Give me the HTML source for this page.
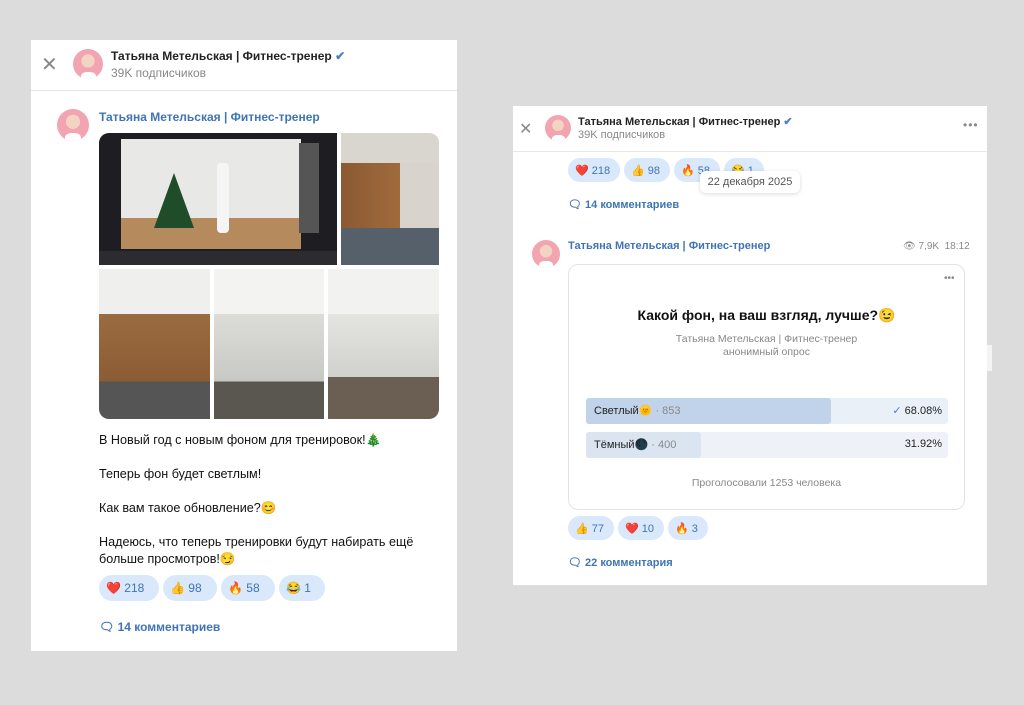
<!DOCTYPE html>
<html><head><meta charset="utf-8"><style>
*{box-sizing:border-box;margin:0;padding:0}
body{width:1024px;height:705px;background:#dcdcdc;position:relative;overflow:hidden;font-family:"Liberation Sans",sans-serif;}
.card{position:absolute;background:#fff}
.a{position:absolute}
.av{position:absolute;border-radius:50%;background:radial-gradient(circle at 50% 40%,#f3d3c2 0 28%,transparent 29%),linear-gradient(#f2a5b0,#f2a5b0);overflow:hidden}
.av::after{content:"";position:absolute;left:25%;bottom:-10%;width:50%;height:35%;background:#fff;border-radius:40% 40% 0 0}
.nm{font-weight:bold;color:#222;font-size:12px}
.sub{color:#888;font-size:12px}
.bl{color:#3f74b5;font-weight:bold;font-size:12px}
.rx{position:absolute;height:26px;border-radius:13px;background:#d9e8fb;color:#3f74b5;font-size:12px;display:flex;align-items:center;padding-left:7px;gap:6px}
.txt{font-size:12.6px;color:#111}
.cm{color:#3f74b5;font-weight:bold;font-size:12px}
.img{position:absolute}
</style></head><body>
<div class="card" style="left:31px;top:40px;width:426px;height:611px">
 <div class="a" style="left:10px;top:12px;font-size:20px;color:#888">✕</div>
 <div class="av" style="left:42px;top:9px;width:30px;height:30px"></div>
 <div class="a nm" style="left:80px;top:9px">Татьяна Метельская | Фитнес-тренер <span style="color:#4a80c8">✔</span></div>
 <div class="a sub" style="left:80px;top:26px">39K подписчиков</div>
 <div class="a" style="left:0;top:50px;width:426px;height:1px;background:#e7e7e7"></div>
 <div class="av" style="left:26px;top:69px;width:32px;height:32px"></div>
 <div class="a bl" style="left:68px;top:70px">Татьяна Метельская | Фитнес-тренер</div>
 <div class="a" style="left:68px;top:93px;width:340px;height:286px;border-radius:10px;overflow:hidden">
  <div class="img" style="left:0;top:0;width:238px;height:132px;background:#1e1e22">
   <div class="img" style="left:22px;top:6px;width:180px;height:110px;background:linear-gradient(#e8e8e6 72%,#b58a5d 72%)"></div>
   <div class="img" style="left:55px;top:40px;width:0;height:0;border-left:20px solid transparent;border-right:20px solid transparent;border-bottom:55px solid #1f4d2a"></div>
   <div class="img" style="left:118px;top:30px;width:12px;height:70px;background:#f5f5f5;border-radius:4px"></div>
   <div class="img" style="left:200px;top:10px;width:20px;height:90px;background:#555"></div>
   <div class="img" style="left:0;top:118px;width:238px;height:14px;background:#2b2b30"></div>
  </div>
  <div class="img" style="left:242px;top:0;width:98px;height:132px;background:linear-gradient(90deg,#8b5a32 0,#a06a3c 60%,#d8d3cc 60%);"><div class="img" style="left:0;top:0;width:98px;height:30px;background:#d9d5cf"></div><div class="img" style="left:0;top:95px;width:98px;height:37px;background:#55606a"></div></div>
  <div class="img" style="left:0;top:136px;width:111px;height:150px;background:linear-gradient(#efefed 30%,#9a6a40 30%,#8c5c34 75%,#555 75%)"></div>
  <div class="img" style="left:115px;top:136px;width:110px;height:150px;background:linear-gradient(#f3f3f1 30%,#dcdcd9 30%,#c8c8c4 75%,#5a5650 75%)"></div>
  <div class="img" style="left:229px;top:136px;width:111px;height:150px;background:linear-gradient(#f2f2f0 30%,#e4e4e1 30%,#d0d0cc 72%,#6a5f52 72%)"></div>
 </div>
 <div class="a txt" style="left:68px;top:392px;line-height:17px">В Новый год с новым фоном для тренировок!🎄<br><br>Теперь фон будет светлым!<br><br>Как вам такое обновление?😊<br><br>Надеюсь, что теперь тренировки будут набирать ещё<br>больше просмотров!😏</div>
 <div class="rx" style="left:68px;top:535px;width:60px">❤️ 218</div>
 <div class="rx" style="left:132px;top:535px;width:54px">👍 98</div>
 <div class="rx" style="left:190px;top:535px;width:54px">🔥 58</div>
 <div class="rx" style="left:248px;top:535px;width:46px">😂 1</div>
 <div class="a cm" style="left:68px;top:580px">🗨 14 комментариев</div>
</div>

<div class="card" style="left:513px;top:106px;width:474px;height:479px">
 <div class="a" style="left:6px;top:13px;font-size:16px;color:#888">✕</div>
 <div class="av" style="left:32px;top:9px;width:26px;height:26px"></div>
 <div class="a nm" style="left:65px;top:9px;font-size:11px">Татьяна Метельская | Фитнес-тренер <span style="color:#4a80c8">✔</span></div>
 <div class="a sub" style="left:65px;top:23px;font-size:11px">39K подписчиков</div>
 <div class="a" style="left:450px;top:12px;color:#888;font-size:12px;letter-spacing:1px">•••</div>
 <div class="a" style="left:0;top:45px;width:474px;height:1px;background:#e7e7e7"></div>
 <div class="rx" style="left:55px;top:52px;width:52px;height:24px;font-size:11px">❤️ 218</div>
 <div class="rx" style="left:111px;top:52px;width:46px;height:24px;font-size:11px">👍 98</div>
 <div class="rx" style="left:161px;top:52px;width:46px;height:24px;font-size:11px">🔥 58</div>
 <div class="rx" style="left:211px;top:52px;width:40px;height:24px;font-size:11px">😂 1</div>
 <div class="a" style="left:187px;top:65px;width:100px;height:22px;background:#fff;border-radius:6px;box-shadow:0 1px 4px rgba(0,0,0,.15);font-size:11px;color:#555;text-align:center;line-height:22px">22 декабря 2025</div>
 <div class="a cm" style="left:55px;top:92px;font-size:11px">🗨 14 комментариев</div>
 <div class="av" style="left:19px;top:134px;width:28px;height:28px"></div>
 <div class="a bl" style="left:55px;top:134px;font-size:11px">Татьяна Метельская | Фитнес-тренер</div>
 <div class="a sub" style="left:390px;top:135px;font-size:10px">👁 7,9K &nbsp;18:12</div>
 <div class="a" style="left:55px;top:158px;width:397px;height:246px;border:1px solid #e3e3e3;border-radius:10px">
  <div class="a" style="left:375px;top:8px;color:#888;font-size:10px">•••</div>
  <div class="a" style="left:0;width:395px;top:42px;text-align:center;font-weight:bold;font-size:14px;color:#111">Какой фон, на ваш взгляд, лучше?😉</div>
  <div class="a" style="left:0;width:395px;top:68px;text-align:center;font-size:10.5px;color:#888;line-height:13px">Татьяна Метельская | Фитнес-тренер<br>анонимный опрос</div>
  <div class="a" style="left:17px;top:133px;width:362px;height:26px;background:#eaf0f8;border-radius:3px"><div style="width:245px;height:26px;background:#c1d3ea;border-radius:3px"></div></div>
  <div class="a" style="left:25px;top:139px;font-size:11px;color:#222">Светлый🌞 <span style="color:#888">· 853</span></div>
  <div class="a" style="right:22px;top:139px;font-size:11px;color:#222"><span style="color:#4a80c8">✓</span> 68.08%</div>
  <div class="a" style="left:17px;top:167px;width:362px;height:26px;background:#eef2f8;border-radius:3px"><div style="width:115px;height:26px;background:#dbe5f2;border-radius:3px"></div></div>
  <div class="a" style="left:25px;top:173px;font-size:11px;color:#222">Тёмный🌑 <span style="color:#888">· 400</span></div>
  <div class="a" style="right:22px;top:173px;font-size:11px;color:#222">31.92%</div>
  <div class="a" style="left:0;width:395px;top:212px;text-align:center;font-size:10.5px;color:#888">Проголосовали 1253 человека</div>
 </div>
 <div class="rx" style="left:55px;top:410px;width:46px;height:24px;font-size:11px">👍 77</div>
 <div class="rx" style="left:105px;top:410px;width:46px;height:24px;font-size:11px">❤️ 10</div>
 <div class="rx" style="left:155px;top:410px;width:40px;height:24px;font-size:11px">🔥 3</div>
 <div class="a cm" style="left:55px;top:450px;font-size:11px">🗨 22 комментария</div>
</div>
<div class="a" style="left:987px;top:345px;width:5px;height:26px;background:#f4f4f4"></div>
</body></html>
